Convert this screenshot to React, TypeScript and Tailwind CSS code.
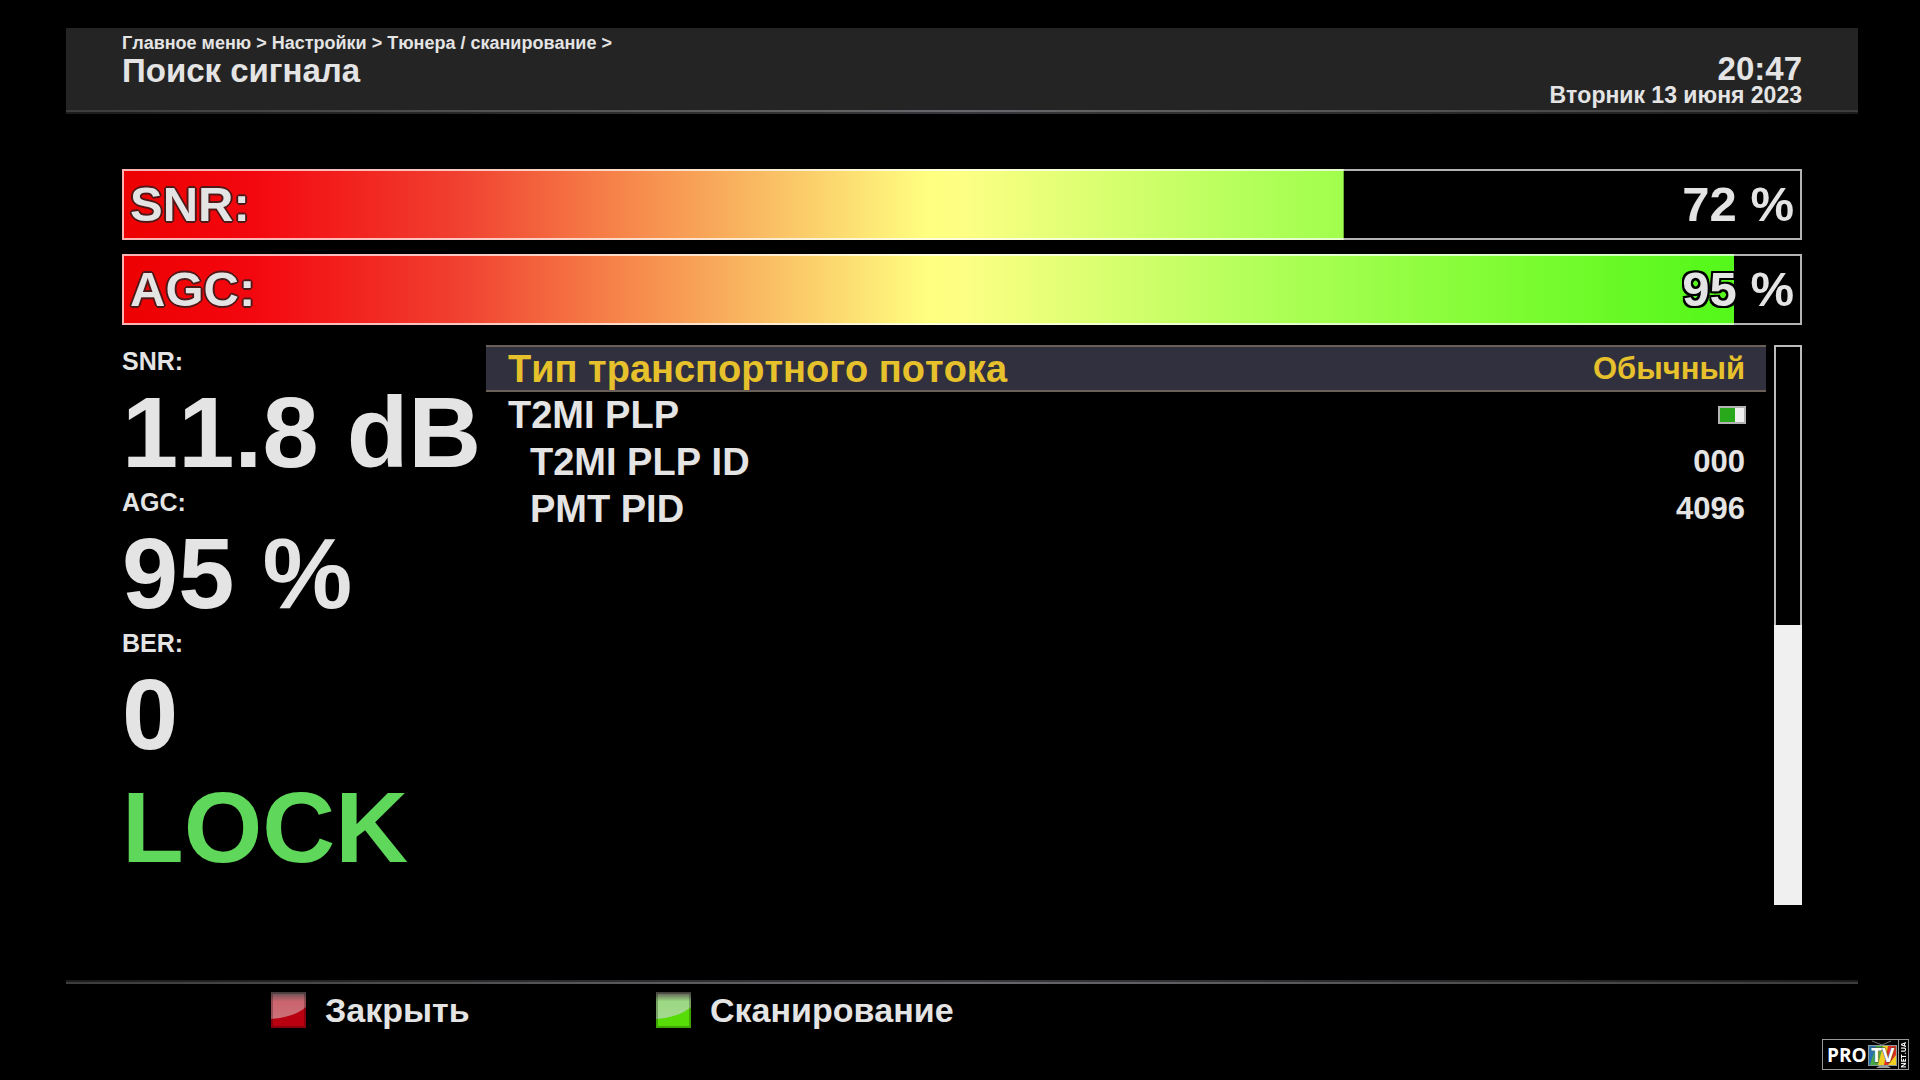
import clsx from "clsx";

const levels = [
  { label: "SNR:", value: 72 },
  { label: "AGC:", value: 95 },
];

const readings = [
  { label: "SNR:", value: "11.8 dB" },
  { label: "AGC:", value: "95 %" },
  { label: "BER:", value: "0" },
];

const outline =
  "[text-shadow:2px_0_#501818,-2px_0_#501818,0_2px_#501818,0_-2px_#501818,1px_1px_#3a1010,-1px_1px_#3a1010,1px_-1px_#3a1010,-1px_-1px_#3a1010]";

const darkOutline =
  "[text-shadow:2px_0_#000,-2px_0_#000,0_2px_#000,0_-2px_#000,2px_2px_#000,-2px_2px_#000,2px_-2px_#000,-2px_-2px_#000]";

function LevelBar({ label, value }: { label: string; value: number }) {
  return (
    <div
      role="meter"
      aria-label={label}
      aria-valuenow={value}
      aria-valuemin={0}
      aria-valuemax={100}
      className="relative flex h-[71px] items-center justify-between px-2 text-[49px] leading-none"
    >
      {/* the gradient spans the whole bar, the level only uncovers part of it */}
      <div
        className="absolute inset-0 bg-[linear-gradient(to_right,#ec0000_0%,#f40810_8%,#f04030_20%,#f68048_29%,#fac868_40%,#ffff80_48%,#fdff84_50%,#b0ff58_68%,#80fc34_82%,#58f81c_94%,#50f818_100%)]"
        style={{ clipPath: `inset(0 ${100 - value * 1.01}% 0 0)` }}
      />
      <div className="absolute inset-0 border-2 border-white/70" />
      <span className={clsx("relative", outline)}>{label}</span>
      <span className={clsx("relative", darkOutline)}>{value} %</span>
    </div>
  );
}

function Setting({
  label,
  value,
  selected,
  indent,
}: {
  label: string;
  value: string;
  selected?: boolean;
  indent?: boolean;
}) {
  return (
    <li
      className={clsx(
        "flex h-[47px] items-center justify-between border-y-2 pr-[21px]",
        indent ? "pl-11" : "pl-[22px]",
        selected ? "border-[#6b6058] bg-[#30303e] text-[#e6c12c]" : "border-transparent"
      )}
    >
      <span className="text-[38px] leading-none">{label}</span>
      <span className="text-[31px] leading-none">{value}</span>
    </li>
  );
}

function KeyIcon({ id, light, base }: { id: string; light: string; base: string }) {
  return (
    <svg viewBox="0 0 35 36" className="h-9 w-[35px]" aria-hidden="true">
      <defs>
        <linearGradient id={id} x1="0" y1="0" x2="0" y2="1">
          <stop offset="0" stopColor="#5a5052" />
          <stop offset="0.35" stopColor={light} stopOpacity="0.9" />
          <stop offset="1" stopColor={light} />
        </linearGradient>
      </defs>
      <rect width="35" height="36" fill={base} />
      <path d="M0 0H35V15C27 22 14 26 0 27Z" fill={`url(#${id})`} />
      <rect x="1" y="1" width="33" height="34" fill="none" stroke="#000" strokeWidth="2" strokeOpacity="0.25" />
    </svg>
  );
}

function Watermark() {
  return (
    <svg viewBox="0 0 88 32" className="fixed right-[10px] bottom-[9px] h-8 w-[88px]" aria-label="PRO TV NET.UA">
      <rect x="0.5" y="0.5" width="76" height="30" fill="#000" stroke="#999" />
      <rect x="76.5" y="0.5" width="10" height="30" fill="#000" stroke="#999" />
      <path d="M50 2L60 6L69 2" fill="none" stroke="#777" />
      <rect x="46" y="6" width="29" height="21" fill="#8a9a9a" />
      <path d="M47 7H58L50 26H47Z" fill="#2a70b0" />
      <path d="M54 7H63L56 26H48Z" fill="#48a840" />
      <path d="M61 7H68L64 26H56Z" fill="#f0d020" />
      <path d="M66 7H74V18L68 26H62Z" fill="#e03020" />
      <path d="M74 16V26H66Z" fill="#f0d020" />
      <path d="M54 29L57 27H66L69 29Z" fill="#999" />
      <g fill="#fff" fontFamily="Open Sans, sans-serif" fontWeight="700">
        <text x="5" y="23" fontSize="19">PRO</text>
        <text x="49" y="23" fontSize="19" stroke="#444" strokeWidth="1" paintOrder="stroke">TV</text>
        <text transform="translate(84 29) rotate(-90)" fontSize="7">NET.UA</text>
      </g>
    </svg>
  );
}

export default function App() {
  return (
    <div className="flex min-h-screen flex-col bg-black px-[66px] pt-7 pr-[62px] font-['Liberation_Sans',Arial,sans-serif] font-bold text-[#e4e4e4] [font-kerning:none]">
      <header className="flex justify-between bg-[#242424] px-14">
        <div className="pt-1">
          <nav className="text-[18px] leading-[22px]">
            <a href="#main">Главное меню</a> &gt; <a href="#settings">Настройки</a> &gt;{" "}
            <a href="#tuner">Тюнера / сканирование</a> &gt;
          </nav>
          <h1 className="text-[33px] leading-[34px]">Поиск сигнала</h1>
        </div>
        <div className="pt-[25px] pb-1 text-right">
          <div className="text-[33px] leading-8">20:47</div>
          <div className="text-[23px] leading-[21px]">Вторник 13 июня 2023</div>
        </div>
      </header>
      <div className="h-[2px] bg-[linear-gradient(to_right,#3c3c3c,#68686c_50%,#3c3c3c)]" />
      <div className="h-[2px] bg-[linear-gradient(to_right,#1c1c1c,#38383c_50%,#1c1c1c)]" />

      <main className="grow px-14 pt-[55px]">
        <div className="flex flex-col gap-[14px]">
          {levels.map((level) => (
            <LevelBar key={level.label} {...level} />
          ))}
        </div>

        <div className="mt-5 flex">
          <dl className="w-[364px] shrink-0">
            {readings.map(({ label, value }) => (
              <div key={label} className="h-[141px]">
                <dt className="text-[25px] leading-8">{label}</dt>
                <dd className="text-[101px] leading-[110px] whitespace-nowrap">{value}</dd>
              </div>
            ))}
            <dd className="text-[101px] leading-[119px] text-[#5fd75a]">LOCK</dd>
          </dl>

          <ul className="grow">
            <Setting label="Тип транспортного потока" value="Обычный" selected />
            <li className="flex h-[46px] items-center justify-between pr-5 pl-[22px]">
              <label htmlFor="plp" className="text-[38px] leading-none">
                T2MI PLP
              </label>
              <input
                id="plp"
                type="checkbox"
                defaultChecked
                className="h-[18px] w-7 appearance-none border-2 border-[#b4b4b4] bg-[#f0f0f0] checked:bg-[linear-gradient(to_right,#2aa81c_62%,#f0f0f0_62%)]"
              />
            </li>
            <Setting label="T2MI PLP ID" value="000" indent />
            <Setting label="PMT PID" value="4096" indent />
          </ul>

          <div className="ml-2 h-[560px] w-7 shrink-0">
            <div className="h-1/2 border-2 border-b-0 border-[#bcbcbc]" />
            <div className="h-1/2 bg-[#f0f0f0]" />
          </div>
        </div>
      </main>

      <footer>
        <div className="h-[2px] bg-[linear-gradient(to_right,#1c1c1c,#38383c_50%,#1c1c1c)]" />
        <div className="h-[2px] bg-[linear-gradient(to_right,#3c3c3c,#68686c_50%,#3c3c3c)]" />
        <div className="flex h-24 items-start pt-2 pl-[205px] text-[34px] leading-9">
          <button type="button" className="flex w-[385px] gap-[19px]">
            <KeyIcon id="red-key" light="#cc7078" base="#b80010" />
            Закрыть
          </button>
          <button type="button" className="flex gap-[19px]">
            <KeyIcon id="green-key" light="#a4d890" base="#58dc08" />
            Сканирование
          </button>
        </div>
      </footer>
      <Watermark />
    </div>
  );
}
